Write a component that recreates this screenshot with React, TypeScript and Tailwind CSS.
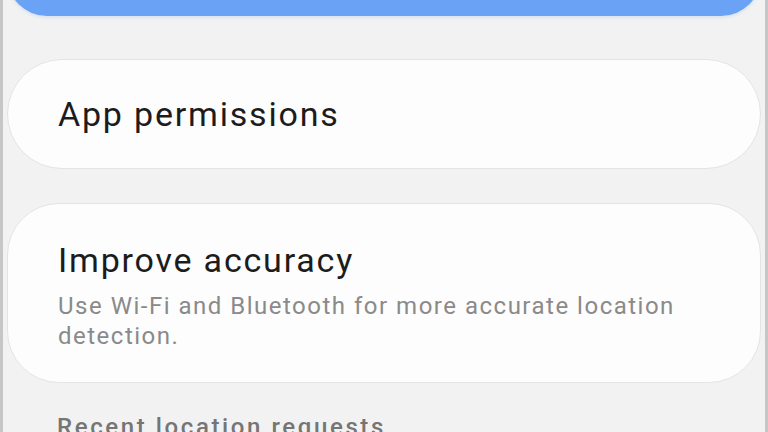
import React from 'react';

const font = { fontFamily: 'Roboto, "Noto Sans", sans-serif' };

const App: React.FC = () => {
  return (
    <div
      className="h-[432px] w-[768px] overflow-hidden border-x-[3px] border-[#c6c6c6] bg-[#f2f2f2]"
      style={font}
    >
      <div className="px-[4px]">
        {/* bottom of the blue button, scrolled mostly off screen */}
        <div className="-mt-[64px] h-[80px] rounded-[45px] bg-[#6aa3f5] shadow-[0_2px_3px_rgba(90,140,220,0.15)]" />

        <div className="mt-[43px] flex h-[110px] items-center rounded-full border border-[#e4e4e4] bg-[#fdfdfd] pl-[50px]">
          <span className="text-[34px] leading-none tracking-[1.8px] text-[#1c1c1c]">App permissions</span>
        </div>

        <div className="mt-[34px] h-[180px] rounded-[52px] border border-[#e4e4e4] bg-[#fdfdfd] pl-[50px] pt-[36px]">
          <div className="text-[34px] leading-[40px] tracking-[1.8px] text-[#1c1c1c]">Improve accuracy</div>
          <div className="mt-[11px] text-[24px] leading-[30px] tracking-[1.5px] text-[#8a8a8a]">
            Use Wi-Fi and Bluetooth for more accurate location
            <br />
            detection.
          </div>
        </div>

        <div className="mt-[29px] pl-[50px] text-[24px] font-medium leading-[30px] tracking-[2.6px] text-[#757575]">
          Recent location requests
        </div>
      </div>
    </div>
  );
};

export default App;
